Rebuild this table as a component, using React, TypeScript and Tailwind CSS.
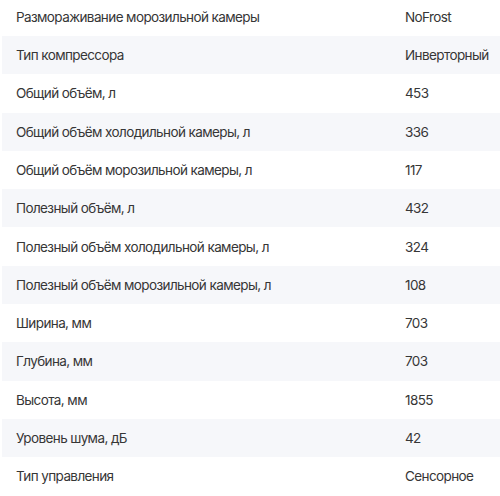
const specs: [string, string][] = [
  ["Размораживание морозильной камеры", "NoFrost"],
  ["Тип компрессора", "Инверторный"],
  ["Общий объём, л", "453"],
  ["Общий объём холодильной камеры, л", "336"],
  ["Общий объём морозильной камеры, л", "117"],
  ["Полезный объём, л", "432"],
  ["Полезный объём холодильной камеры, л", "324"],
  ["Полезный объём морозильной камеры, л", "108"],
  ["Ширина, мм", "703"],
  ["Глубина, мм", "703"],
  ["Высота, мм", "1855"],
  ["Уровень шума, дБ", "42"],
  ["Тип управления", "Сенсорное"],
];

export default function App() {
  return (
    <div className="h-[496px] w-[500px] overflow-hidden bg-white font-['Inter',sans-serif] text-[13.5px] tracking-[-0.6px] text-[#363636]">
      <div className="-mt-[2.3px] ml-[2px] flex flex-col">
        {specs.map(([label, value], i) => (
          <div
            key={label}
            className={`grid h-[38.3px] grid-cols-[389px_1fr] items-center pl-[14px] ${
              i % 2 === 1 ? "bg-[#f6f7fa]" : "bg-white"
            }`}
          >
            <span>{label}</span>
            <span>{value}</span>
          </div>
        ))}
      </div>
    </div>
  );
}
